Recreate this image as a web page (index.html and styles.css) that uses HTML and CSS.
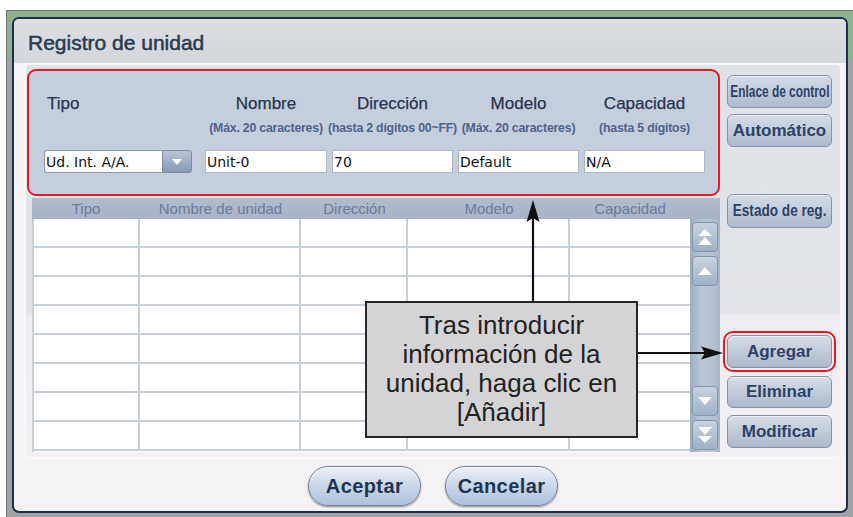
FILE: index.html
```html
<!DOCTYPE html>
<html lang="es">
<head>
<meta charset="utf-8">
<title>Registro de unidad</title>
<link rel="stylesheet" href="styles.css">
</head>
<body>
<div class="frame">
  <div class="dialog">
    <div class="title">Registro de unidad</div>
    <div class="panel">
      <div class="main">
        <div class="form">
          <div class="lbl lbl-left">Tipo</div>
          <div class="lbl">Nombre</div>
          <div class="lbl">Dirección</div>
          <div class="lbl">Modelo</div>
          <div class="lbl">Capacidad</div>
          <div class="sub"></div>
          <div class="sub">(Máx. 20 caracteres)</div>
          <div class="sub">(hasta 2 dígitos 00~FF)</div>
          <div class="sub">(Máx. 20 caracteres)</div>
          <div class="sub">(hasta 5 dígitos)</div>
          <div class="select">
            <span class="select-text">Ud. Int. A/A.</span>
            <span class="select-btn"><svg width="12" height="8" viewBox="0 0 12 8"><path d="M1 1 L11 1 L6 7 Z" fill="#fff"/></svg></span>
          </div>
          <div class="field">Unit-0</div>
          <div class="field">70</div>
          <div class="field">Default</div>
          <div class="field">N/A</div>
        </div>
        <div class="table">
          <div class="thead">
            <div>Tipo</div>
            <div>Nombre de unidad</div>
            <div>Dirección</div>
            <div>Modelo</div>
            <div>Capacidad</div>
          </div>
          <div class="tbody">
            <div class="grid">
              <i></i><i></i><i></i><i></i><i></i>
              <i></i><i></i><i></i><i></i><i></i>
              <i></i><i></i><i></i><i></i><i></i>
              <i></i><i></i><i></i><i></i><i></i>
              <i></i><i></i><i></i><i></i><i></i>
              <i></i><i></i><i></i><i></i><i></i>
              <i></i><i></i><i></i><i></i><i></i>
              <i></i><i></i><i></i><i></i><i></i>
            </div>
            <div class="scroll">
              <div class="sgroup">
                <div class="sbtn"><svg width="18" height="20" viewBox="0 0 18 20"><path d="M2 9 L9 2 L16 9 Z M2 18 L9 10 L16 18 Z" fill="#fff"/></svg></div>
                <div class="sbtn"><svg width="18" height="12" viewBox="0 0 18 12"><path d="M2 10 L9 2 L16 10 Z" fill="#fff"/></svg></div>
              </div>
              <div class="sgroup">
                <div class="sbtn"><svg width="18" height="12" viewBox="0 0 18 12"><path d="M2 2 L9 10 L16 2 Z" fill="#fff"/></svg></div>
                <div class="sbtn"><svg width="18" height="20" viewBox="0 0 18 20"><path d="M2 2 L9 10 L16 2 Z M2 11 L9 18 L16 11 Z" fill="#fff"/></svg></div>
              </div>
            </div>
          </div>
        </div>
      </div>
      <div class="side">
        <div class="btn b-enlace"><span class="squeeze70">Enlace de control</span></div>
        <div class="btn b-auto">Automático</div>
        <div class="btn b-estado"><span class="squeeze80">Estado de reg.</span></div>
        <div class="btn b-agregar">Agregar</div>
        <div class="btn b-elim">Eliminar</div>
        <div class="btn b-mod">Modificar</div>
      </div>
    </div>
    <div class="footer">
      <div class="pill">Aceptar</div>
      <div class="pill">Cancelar</div>
    </div>
  </div>
</div>

<div class="callout">Tras introducir<br>información de la<br>unidad, haga clic en<br>[Añadir]</div>
<svg class="arrows" width="853" height="517" viewBox="0 0 853 517">
  <line x1="533" y1="302" x2="533" y2="215" stroke="#111" stroke-width="2.2"/>
  <path d="M533 200 L539.5 222 L533 218 L526.5 222 Z" fill="#111"/>
  <line x1="637" y1="353" x2="708" y2="353" stroke="#111" stroke-width="2.2"/>
  <path d="M723 353 L701 346.5 L705 353 L701 359.5 Z" fill="#111"/>
</svg>
</body>
</html>
```
FILE: styles.css
```css
html, body {
  margin: 0;
  padding: 0;
  background: #ffffff;
}
body {
  position: relative;
  width: 853px;
  height: 517px;
  overflow: hidden;
  font-family: "Liberation Sans", Arial, sans-serif;
}
.frame {
  margin: 10px 0 0 6px;
  width: 847px;
  height: 507px;
  box-sizing: border-box;
  border-left: 1px solid #6e6e6e;
  border-top: 1px solid #6e6e6e;
  background: linear-gradient(to bottom, #8fb191 0, #8fb191 48px, #9fa3a6 50px, #9fa3a6 100%);
  padding: 6px 5px 0 5px;
}
.dialog {
  width: 836px;
  height: 496px;
  box-sizing: border-box;
  border: 2px solid #1f2f4a;
  border-radius: 7px;
  background: #f4f2f5;
  display: flex;
  flex-direction: column;
  overflow: hidden;
}
.title {
  height: 44px;
  box-sizing: border-box;
  padding: 4px 0 0 14px;
  display: flex;
  align-items: center;
  font-size: 21px;
  -webkit-text-stroke: 0.5px #2b3a4f;
  color: #2b3a4f;
  background: linear-gradient(to bottom, #dcdee2, #d4d7dc);
}
.panel {
  margin: 0 4px 0 10px;
  height: 396px;
  box-sizing: border-box;
  border: 2px solid #f8f8fa;
  border-radius: 6px;
  padding: 4px 0 0 1px;
  display: flex;
  background: linear-gradient(to bottom, #dfe2e7 0, #e2e4e9 248px, #eeecf0 252px, #f2f0f3 100%);
}
.main {
  width: 693px;
  display: flex;
  flex-direction: column;
}
.form {
  height: 127px;
  box-sizing: border-box;
  border: 2px solid #ee1620;
  border-radius: 9px;
  background: #c5cedc;
  padding: 24px 0 0 15px;
  display: grid;
  grid-template-columns: 156px 122px 121px 121px 121px;
  grid-template-rows: 18px 22px 38px;
  column-gap: 5px;
}
.lbl {
  display: flex;
  justify-content: center;
  font-size: 17px;
  line-height: 18px;
  color: #28344e;
  -webkit-text-stroke: 0.25px #28344e;
  white-space: nowrap;
}
.lbl-left {
  justify-content: flex-start;
  padding-left: 3px;
}
.sub {
  align-self: end;
  display: flex;
  justify-content: center;
  font-size: 12.3px;
  line-height: 14px;
  font-weight: bold;
  color: #52628a;
  white-space: nowrap;
  letter-spacing: -0.2px;
}
.select {
  align-self: end;
  width: 148px;
  height: 23px;
  display: flex;
  box-sizing: border-box;
}
.select-text {
  flex: 1;
  background: #fff;
  border: 1px solid #8f9bac;
  border-right: none;
  border-radius: 3px 0 0 3px;
  font-family: "DejaVu Sans", sans-serif;
  font-size: 14px;
  line-height: 23px;
  padding-left: 1px;
  color: #111;
}
.select-btn {
  width: 28px;
  border: 1px solid #7d8ca3;
  border-radius: 0 3px 3px 0;
  background: linear-gradient(to bottom, #bac5d4, #8898b0);
  display: flex;
  align-items: center;
  justify-content: center;
}
.field {
  align-self: end;
  height: 23px;
  box-sizing: border-box;
  background: #fff;
  border: 1px solid #b0b8c4;
  font-family: "DejaVu Sans", sans-serif;
  font-size: 14px;
  line-height: 23px;
  padding-left: 1px;
  color: #111;
}
.table {
  margin: 2px 0 0 5px;
  width: 688px;
}
.thead {
  height: 21px;
  display: grid;
  grid-template-columns: 108px 161px 107px 162px 120px 30px;
  background: linear-gradient(to bottom, #b1bccd, #a7b3c6);
}
.thead div {
  font-size: 15px;
  line-height: 21px;
  color: #6b7b99;
  text-align: center;
  white-space: nowrap;
}
.tbody {
  display: flex;
  height: 233px;
}
.grid {
  width: 658px;
  box-sizing: border-box;
  border-left: 2px solid #c9cfd6;
  display: grid;
  grid-template-columns: 106px 161px 107px 162px 122px;
  grid-template-rows: repeat(8, 29px);
  background: #fff;
}
.grid i {
  display: block;
  box-sizing: border-box;
  border-right: 2px solid #c9cfd6;
  border-bottom: 2px solid #c9cfd6;
}
.grid i:nth-child(5n) {
  border-right: none;
}
.scroll {
  width: 30px;
  box-sizing: border-box;
  padding: 3px 2px 2px 2px;
  background: linear-gradient(to right, #9cadc2, #bac6d5 40%, #b5c1d1 80%, #a6b4c7);
  display: flex;
  flex-direction: column;
  justify-content: space-between;
}
.sgroup {
  display: flex;
  flex-direction: column;
  gap: 4px;
}
.sbtn {
  height: 30px;
  box-sizing: border-box;
  border: 1px solid #8494ab;
  border-radius: 4px;
  background: linear-gradient(to bottom, #c9d3e0, #9fb0c5);
  display: flex;
  align-items: center;
  justify-content: center;
}
.side {
  margin-left: 7px;
  width: 105px;
  display: flex;
  flex-direction: column;
}
.btn {
  height: 33px;
  box-sizing: border-box;
  border: 1px solid #8592a8;
  border-radius: 6px;
  background: linear-gradient(to bottom, #d5dce7, #aebacc);
  box-shadow: inset 0 1px 0 rgba(255,255,255,0.6);
  display: flex;
  align-items: center;
  justify-content: center;
  font-size: 17px;
  font-weight: bold;
  color: #2e4268;
  white-space: nowrap;
}
.squeeze70 {
  display: inline-block;
  transform: scaleX(0.7);
}
.squeeze80 {
  display: inline-block;
  transform: scaleX(0.8);
}
.b-enlace { margin-top: 6px; }
.b-auto { margin-top: 6px; }
.b-estado { margin-top: 47px; height: 34px; }
.b-agregar {
  margin-top: 107px;
  outline: 2px solid #ee1620;
  outline-offset: 2px;
}
.b-elim { margin-top: 8px; height: 32px; }
.b-mod { margin-top: 7px; }
.footer {
  flex: 1;
  display: flex;
  justify-content: center;
  gap: 24px;
  padding: 7px 0 0 6px;
}
.pill {
  width: 113px;
  height: 40px;
  box-sizing: border-box;
  border: 1px solid #75849c;
  border-radius: 20px;
  background: linear-gradient(to bottom, #eef2f8, #c9d6e6 50%, #afc2da);
  box-shadow: 0 1px 2px rgba(0,0,0,0.45), inset 0 1px 0 rgba(255,255,255,0.8);
  display: flex;
  align-items: center;
  justify-content: center;
  font-size: 20px;
  font-weight: bold;
  letter-spacing: 0.4px;
  color: #1e3656;
}
.callout {
  position: absolute;
  left: 365px;
  top: 301px;
  width: 273px;
  height: 137px;
  box-sizing: border-box;
  border: 2px solid #262626;
  background: #d4d4d6;
  padding-top: 8px;
  text-align: center;
  font-size: 26px;
  line-height: 29px;
  color: #222;
  white-space: nowrap;
}
.arrows {
  position: absolute;
  left: 0;
  top: 0;
  pointer-events: none;
}
```
